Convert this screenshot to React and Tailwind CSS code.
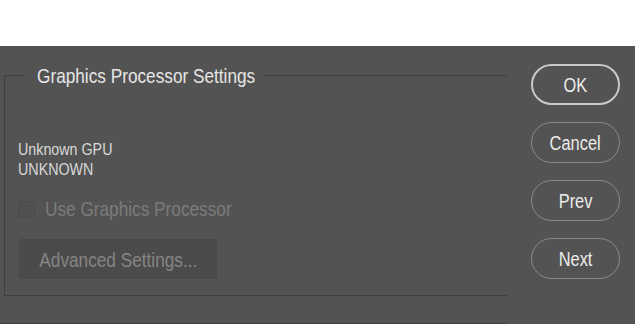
import { useState } from "react";

const fuente = "font-['Liberation_Sans','Arial',sans-serif]";

// Liberation Sans es más ancha que la fuente del diálogo: se estrecha a mano
function Estrecho({ children, className = "" }) {
  return <span className={`inline-block whitespace-nowrap scale-x-[0.82] ${className}`}>{children}</span>;
}

function BotonRedondo({ texto, activo }) {
  const borde = activo ? "border-2 border-[#c9c9c9]" : "border border-[#8a8a8a]";
  return (
    <button className={`w-[89px] h-[41px] rounded-full ${borde} text-[20px] leading-none text-[#ececec] flex items-center justify-center`}>
      <Estrecho>{texto}</Estrecho>
    </button>
  );
}

export default function App() {
  const [usarGpu, setUsarGpu] = useState(false);

  return (
    <div className={`w-[635px] h-[324px] bg-white flex flex-col overflow-hidden ${fuente}`}>
      <div className="h-[46px] bg-white" />
      <div className="flex-1 bg-[#535353] flex">
        {/* grupo de ajustes */}
        <div className="w-[507px] pt-[17px] flex flex-col">
          <div className="ml-[4px] flex">
            <div className="w-[21px] h-[13px] mt-[12px] border-l border-t border-[#3f3f3f]" />
            <div className="mx-[12px] w-[216px] text-[21px] leading-[25px] text-[#e6e6e6]">
              <Estrecho className="origin-left">Graphics Processor Settings</Estrecho>
            </div>
            <div className="flex-1 h-px mt-[12px] bg-[#3f3f3f]" />
          </div>
          <div className="ml-[4px] h-[208px] border-l border-b border-[#3f3f3f] pl-[13px] pt-[52px] flex flex-col">
            <div className="text-[17px] leading-[20px] text-[#d8d8d8]">
              <div><Estrecho className="origin-left scale-x-[0.84]">Unknown GPU</Estrecho></div>
              <div><Estrecho className="origin-left scale-x-[0.84]">UNKNOWN</Estrecho></div>
            </div>
            <label className="mt-[17px] h-[24px] flex items-center gap-[10px] text-[21px] leading-[24px] text-[#7b7b7b]">
              <span
                onClick={() => setUsarGpu(false)}
                className="w-[17px] h-[17px] shrink-0 rounded-[3px] border border-[#4a4a4a] bg-[#505050]"
              />
              <Estrecho className="origin-left">Use Graphics Processor</Estrecho>
            </label>
            <button className="mt-[18px] ml-px w-[198px] h-[40px] rounded-[3px] border border-[#494949] bg-[#4b4b4b] text-[21px] leading-none text-[#858585] flex items-center justify-center">
              <Estrecho>Advanced Settings...</Estrecho>
            </button>
          </div>
          <div className="mt-[27px] h-px bg-[#3f3f3f]" />
        </div>

        {/* botones */}
        <div className="pl-[24px] pt-[18px] flex flex-col gap-[17px]">
          <BotonRedondo texto="OK" activo />
          <BotonRedondo texto="Cancel" />
          <BotonRedondo texto="Prev" />
          <BotonRedondo texto="Next" />
        </div>
      </div>
    </div>
  );
}
